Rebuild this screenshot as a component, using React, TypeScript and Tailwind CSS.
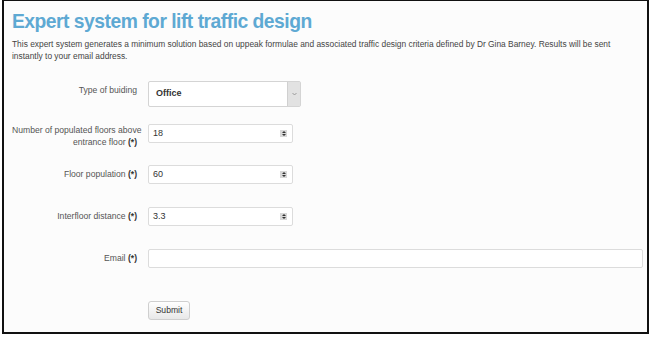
export default function App() {
  const Spin = () => (
    <span className="flex h-[7px] w-[7px] flex-col items-center justify-center bg-[#d8d8d8]">
      <span className="h-0 w-0 border-x-[2px] border-b-[2px] border-x-transparent border-b-[#333]" />
      <span className="mt-[1px] h-0 w-0 border-x-[2px] border-t-[2px] border-x-transparent border-t-[#333]" />
    </span>
  );

  const Req = () => <b className="font-bold text-[#333]">(*)</b>;

  const NumberInput = ({ value }: { value: string }) => (
    <div className="flex h-[19px] w-[145px] items-center justify-between rounded-[2px] border border-[#dcdcdc] bg-white pl-[4px] pr-[5px] text-[9px] text-[#333]">
      <span>{value}</span>
      <Spin />
    </div>
  );

  return (
    <div className="h-[337px] w-[653px] bg-white font-['Liberation_Sans',Arial,sans-serif]">
      <div className="ml-[2px] h-[334px] w-[647px] border-2 border-t border-[#111] bg-[#fcfcfc] px-[8px]">
        <h1 className="mt-[8px] text-[19.3px] font-bold leading-[26px] tracking-[-0.5px] text-[#5ea9d3]">
          Expert system for lift traffic design
        </h1>
        <p className="mt-[3px] text-[8.4px] leading-[12px] text-[#444]">
          This expert system generates a minimum solution based on uppeak formulae and associated traffic design criteria defined by Dr Gina Barney. Results will be sent instantly to your email address.
        </p>

        <div className="mt-[19px] grid grid-cols-[125px_1fr] gap-x-[11px] text-[8.6px] text-[#555]">
          {/* Type of building */}
          <div className="whitespace-nowrap pt-[3px] text-right leading-[12px]">Type of buiding</div>
          <div className="flex h-[26px] w-[153px] items-stretch rounded-[2px] border border-[#d4d4d4] bg-white">
            <span className="flex flex-1 items-center pl-[7px] text-[9px] font-bold text-[#333]">Office</span>
            <span className="flex w-[13px] items-center justify-center border-l border-[#d0d0d0] bg-[#e2e2e2]">
              <svg width="5" height="4" viewBox="0 0 5 4" fill="none">
                <path d="M0.5 1l2 2 2-2" stroke="#8a8a8a" strokeWidth="0.8" />
              </svg>
            </span>
          </div>

          <div className="mt-[17px] whitespace-nowrap text-right leading-[12px]">
            Number of populated floors above
            <br />
            entrance floor <Req />
          </div>
          <div className="mt-[17px]">
            <NumberInput value="18" />
          </div>

          <div className="mt-[17px] whitespace-nowrap pt-[3px] text-right leading-[12px]">
            Floor population <Req />
          </div>
          <div className="mt-[17px]">
            <NumberInput value="60" />
          </div>

          <div className="mt-[23px] whitespace-nowrap pt-[3px] text-right leading-[12px]">
            Interfloor distance <Req />
          </div>
          <div className="mt-[23px]">
            <NumberInput value="3.3" />
          </div>

          <div className="mt-[23px] whitespace-nowrap pt-[3px] text-right leading-[12px]">
            Email <Req />
          </div>
          <div className="mt-[23px]">
            <div className="h-[19px] w-[495px] rounded-[2px] border border-[#dcdcdc] bg-white" />
          </div>

          <div />
          <div className="mt-[33px]">
            <button className="h-[19px] w-[42px] rounded-[3px] border border-[#cfcfcf] bg-gradient-to-b from-white to-[#e8e8e8] text-[8.6px] text-[#333]">
              Submit
            </button>
          </div>
        </div>
      </div>
    </div>
  );
}
